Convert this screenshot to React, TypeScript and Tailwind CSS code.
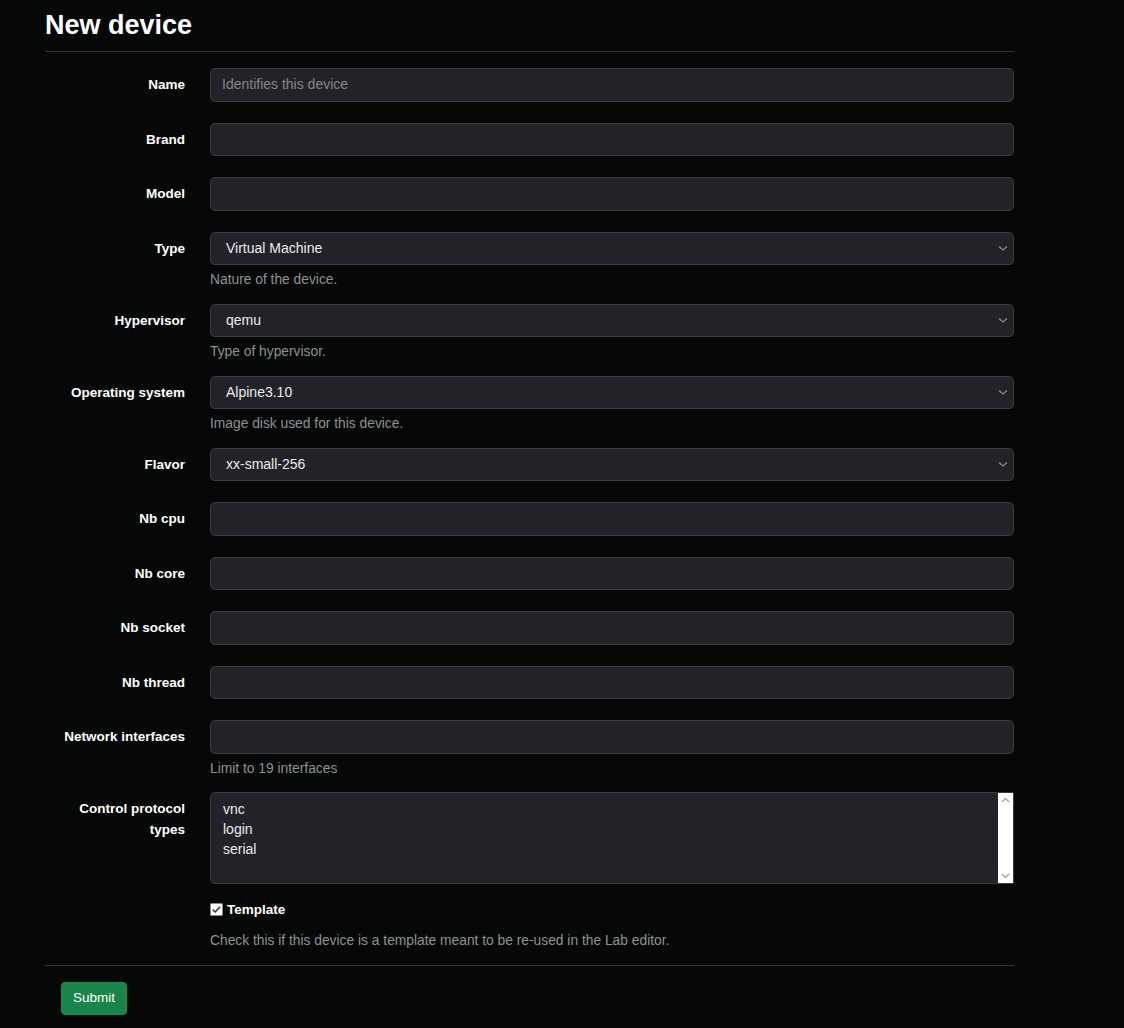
import React from "react";

const font = { fontFamily: '"Liberation Sans", Arial, sans-serif' };

interface RowProps {
  label: React.ReactNode
  help?: string
  children: React.ReactNode
  last?: string
}

function Row({ label, help, children, last }: RowProps) {
  return (
    <div className={`flex ${last ?? (help ? "mb-[14.5px]" : "mb-[21px]")}`}>
      <label className="w-[140px] shrink-0 pt-[6px] text-right text-[13.5px] font-bold leading-[21px] text-white">
        {label}
      </label>
      <div className="ml-[25px] flex-1">
        {children}
        {help && <p className="mt-[6px] text-[13.8px] leading-[18px] text-[#8d9197]">{help}</p>}
      </div>
    </div>
  );
}

function TextInput({ placeholder }: { placeholder?: string }) {
  return (
    <div className="flex h-[33.5px] items-center rounded-[5px] border border-[#3b3b40] bg-[#232228] pl-[11px] text-[14px]">
      {placeholder && <span className="text-[#85858b]">{placeholder}</span>}
    </div>
  );
}

function Select({ value }: { value: string }) {
  return (
    <div className="flex h-[33.5px] items-center justify-between rounded-[5px] border border-[#3b3b40] bg-[#232228] pl-[15px] pr-[4px] text-[14px] text-[#ececec]">
      <span>{value}</span>
      <svg width="10" height="8" viewBox="0 0 10 8" className="mr-[1px]">
        <path d="M1 2.5 L5 6 L9 2.5" fill="none" stroke="#8c8c90" strokeWidth="1.3" />
      </svg>
    </div>
  );
}

function MultiSelect({ options }: { options: string[] }) {
  return (
    <div className="flex h-[91.5px] overflow-hidden rounded-l-[5px] border border-[#3b3b40] bg-[#232228]">
      <div className="flex-1 pl-[12px] pt-[6px] text-[14px] leading-[20px] text-[#ececec]">
        {options.map((o) => (
          <div key={o}>{o}</div>
        ))}
      </div>
      <div className="flex w-[15px] flex-col items-center justify-between bg-white py-[4px]">
        <svg width="9" height="6" viewBox="0 0 9 6">
          <path d="M1 5 L4.5 1.5 L8 5" fill="none" stroke="#a3a3a3" strokeWidth="1.4" />
        </svg>
        <svg width="9" height="6" viewBox="0 0 9 6">
          <path d="M1 1 L4.5 4.5 L8 1" fill="none" stroke="#a3a3a3" strokeWidth="1.4" />
        </svg>
      </div>
    </div>
  );
}

export default function App() {
  return (
    <div className="min-h-[1028px] w-full bg-[#060707] text-white" style={font}>
      <div className="ml-[45px] w-[969px]">
        <h2 className="pt-[9px] pb-[9px] text-[27px] font-bold leading-[33px] text-white">New device</h2>
        <div className="mb-[16px] h-px bg-[#333336]" />

        <Row label="Name"><TextInput placeholder="Identifies this device" /></Row>
        <Row label="Brand"><TextInput /></Row>
        <Row label="Model"><TextInput /></Row>
        <Row label="Type" help="Nature of the device."><Select value="Virtual Machine" /></Row>
        <Row label="Hypervisor" help="Type of hypervisor."><Select value="qemu" /></Row>
        <Row label="Operating system" help="Image disk used for this device."><Select value="Alpine3.10" /></Row>
        <Row label="Flavor"><Select value="xx-small-256" /></Row>
        <Row label="Nb cpu"><TextInput /></Row>
        <Row label="Nb core"><TextInput /></Row>
        <Row label="Nb socket"><TextInput /></Row>
        <Row label="Nb thread"><TextInput /></Row>
        <Row label="Network interfaces" help="Limit to 19 interfaces"><TextInput /></Row>
        <Row label={<>Control protocol<br />types</>} last="mb-[16px]">
          <MultiSelect options={["vnc", "login", "serial"]} />
        </Row>

        <div className="ml-[165px]">
          <div className="flex items-center gap-[4px] text-[13.5px] font-bold leading-[19px]">
            <svg width="13" height="13" viewBox="0 0 13 13">
              <rect x="0.5" y="0.5" width="12" height="12" rx="1" fill="#ffffff" stroke="#8a8a8a" />
              <path d="M2.8 6.6 L5.2 9 L10.2 3.8" fill="none" stroke="#333" strokeWidth="1.5" />
            </svg>
            <span>Template</span>
          </div>
          <p className="mt-[13.5px] text-[13.8px] leading-[18px] text-[#8d9197]">
            Check this if this device is a template meant to be re-used in the Lab editor.
          </p>
        </div>

        <div className="mt-[15px] h-px bg-[#333336]" />
        <div className="pl-[16px] pt-[16px]">
          <button className="h-[32.5px] rounded-[4px] border border-[#1b8d4f] bg-[#198548] px-[11px] text-[13.5px] text-white">
            Submit
          </button>
        </div>
      </div>
    </div>
  );
}
